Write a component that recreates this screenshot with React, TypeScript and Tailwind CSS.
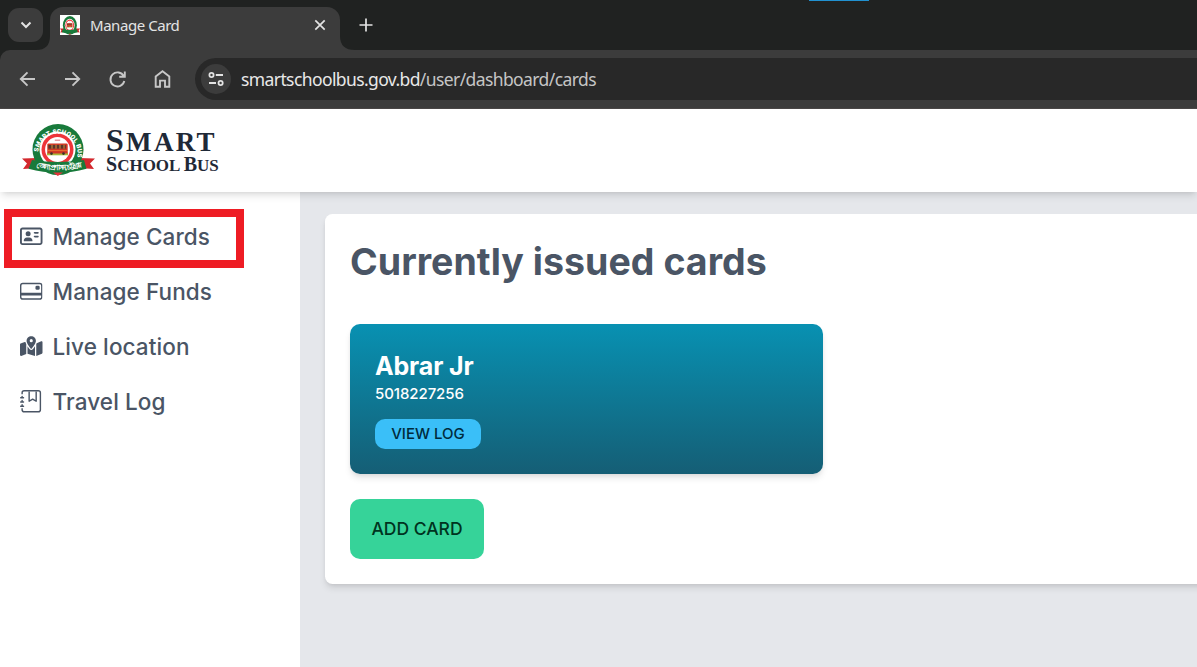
import type { ReactNode } from "react";
import { FaRegAddressCard, FaMapLocationDot } from "react-icons/fa6";
import { BsCreditCard, BsJournalBookmark } from "react-icons/bs";

function Emblem({ className, lettering = true }: { className: string; lettering?: boolean }) {
  return (
    <svg className={className} viewBox="7 9 73 52" preserveAspectRatio="none">
      <defs>
        <path id="ringText" d="M 23.6 41 A 19.6 19.6 0 1 1 62.4 41" />
        <path id="bandText" d="M 18 52.4 Q 43 57.4 68 52.4" />
      </defs>
      <path d="M7 43.5 L23 43 L23 53 L8 54 L12 48.5 Z" fill="#d3282d" />
      <path d="M80 43.5 L63 43 L63 53 L79 54 L75 48.5 Z" fill="#d3282d" />
      <circle cx="43" cy="34.6" r="25.5" fill="#187a3b" />
      <circle cx="42.5" cy="34.5" r="18" fill="#fff" />
      <circle cx="42.5" cy="34.5" r="16" fill="#ee343a" />
      <circle cx="42.5" cy="34.5" r="12.4" fill="#fff" />
      <rect x="32" y="37.5" width="21" height="2.8" fill="#a4b93c" />
      <rect x="32.3" y="28.6" width="20.4" height="10" rx="1.2" fill="#cf3524" />
      <rect x="33.4" y="30" width="17.4" height="3.6" fill="#58352b" />
      <path d="M37 29.7v4M41 29.7v4M45 29.7v4M49 29.7v4" stroke="#e99a3c" strokeWidth=".9" />
      <path d="M32.5 35.6h20" stroke="#ef8c35" strokeWidth=".7" />
      <circle cx="36.5" cy="38.6" r="1.3" fill="#3d302c" />
      <circle cx="48.5" cy="38.6" r="1.3" fill="#3d302c" />
      <path d="M39.8 25.2h5.4" stroke="#df858b" strokeWidth="1.2" />
      <path d="M17 45 Q43 49 69 45 L71.5 53.8 Q43 61.5 13.5 53.8 Z" fill="#187a3b" />
      <path d="M38 57.4 L48 57.4 L42.8 61 Z" fill="#e4343a" />
      {lettering && (
        <>
          <text fill="#fff" fontSize="6.4" fontWeight="900" fontFamily="Roboto, sans-serif">
            <textPath href="#ringText" startOffset="4" textLength="64">SMART SCHOOL BUS</textPath>
          </text>
          <text fill="#fff" fontSize="7.4" fontWeight="700" fontFamily="'Noto Sans', sans-serif">
            <textPath href="#bandText" startOffset="1.5" textLength="47">জেলা প্রশাসন, চট্টগ্রাম</textPath>
          </text>
        </>
      )}
    </svg>
  );
}

function BrowserChrome() {
  return (
    <div className="h-[109px] shrink-0 bg-[#202221] font-['Noto_Sans',sans-serif]">
      <div className="relative flex h-[50px]">
        <div className="ml-2 mt-2 flex h-[34px] w-[35px] items-center justify-center rounded-[11px] bg-[#3c3c3c]">
          <svg className="size-4" viewBox="0 0 16 16" fill="none" stroke="#e3e3e3" strokeWidth="2">
            <path d="M3.5 5.5 8 10l4.5-4.5" />
          </svg>
        </div>
        <svg className="h-[50px] w-[7px] overflow-visible" viewBox="0 0 7 50">
          <path d="M-7 50 Q7 50 7 36 V50Z" fill="#3c3c3c" />
        </svg>
        <div className="mt-[7px] flex w-[290px] items-center rounded-t-[13px] bg-[#3c3c3c] pb-[7px] pl-[10px] pr-[13px]">
          <div className="flex size-5 items-center justify-center bg-white">
            <Emblem className="h-[19px] w-5" lettering={false} />
          </div>
          <span className="ml-[10px] flex-1 whitespace-nowrap text-[15px] tracking-[-0.45px] text-[#e3e3e3]">Manage Card</span>
          <svg className="size-[14px]" viewBox="0 0 14 14" stroke="#e3e3e3" strokeWidth="1.7">
            <path d="m2.3 2.3 9.4 9.4m0-9.4-9.4 9.4" />
          </svg>
        </div>
        <svg className="h-[50px] w-[15px]" viewBox="0 0 15 50">
          <path d="M0 36 Q0 50 15 50 H0Z" fill="#3c3c3c" />
        </svg>
        <svg className="ml-[4px] mt-[18px] size-[14px]" viewBox="0 0 14 14" stroke="#e3e3e3" strokeWidth="1.7">
          <path d="M7 .5v13M.5 7h13" />
        </svg>
        <div className="absolute left-[809px] top-0 h-px w-[60px] bg-[#2191d0]" />
      </div>
      <div className="flex h-[59px] items-center rounded-tl-[10px] border-b border-[#4a4747] bg-[#3c3c3c] pl-[18px]">
        <svg className="h-5 w-[160px]" viewBox="0 0 160 20" fill="none" stroke="#c7c7c7" strokeWidth="1.9">
          <path d="M17 10H3M9.5 3.3 2.8 10l6.7 6.7" />
          <path d="M47 10h14M54.5 3.3l6.7 6.7-6.7 6.7" />
          <path d="M105.7 7.2A7 7 0 1 0 106.3 12M106.8 2.5v5.3h-5.6" />
          <path d="M137.7 17.8V7.4l6.8-5.1 6.8 5.1v10.4h-4.3v-6.2h-5v6.2z" />
        </svg>
        <div className="ml-[17px] flex h-[42px] flex-1 items-center rounded-l-full bg-[#282828] pl-[6px]">
          <div className="flex size-[30px] items-center justify-center rounded-full bg-[#3c3c3c]">
            <svg className="size-[18px]" viewBox="0 0 18 18" fill="none" stroke="#e3e3e3" strokeWidth="1.8">
              <circle cx="4.5" cy="5" r="2.1" />
              <path d="M8.8 5H16M2 13h7" />
              <circle cx="13.6" cy="13" r="2.1" />
            </svg>
          </div>
          <div className="ml-[10px] flex whitespace-nowrap text-[17.5px] tracking-[-0.6px]">
            <span className="text-[#e8e8e8]">smartschoolbus.gov.bd</span>
            <span className="text-[#c5c5c5]">/user/dashboard/cards</span>
          </div>
        </div>
      </div>
    </div>
  );
}

function NavItem({ icon, label }: { icon: ReactNode; label: string }) {
  return (
    <li className="flex h-[55px] items-center gap-[10px] text-[22.5px] font-medium tracking-[0.1px] text-gray-600">
      {icon}
      <span className="whitespace-nowrap">{label}</span>
    </li>
  );
}

export default function App() {
  return (
    <div className="flex h-[667px] w-full flex-col overflow-hidden bg-white font-[Inter,sans-serif]">
      <BrowserChrome />
      <header className="relative z-10 flex h-[83px] shrink-0 items-center bg-white pl-[22px] shadow-[0_5px_7.5px_-1.25px_rgba(0,0,0,0.1),0_2.5px_5px_-2.5px_rgba(0,0,0,0.1)]">
        <Emblem className="-mt-[2px] h-[52px] w-[73px]" />
        <div className="ml-[11px] font-['Liberation_Serif',serif] font-bold text-[#1f2937]">
          <div className="whitespace-nowrap text-[27px] leading-[28px] tracking-[2.3px]">
            <span className="text-[32px]">S</span>MART
          </div>
          <div className="-mt-[2px] whitespace-nowrap text-[17px] leading-[20px]">
            <span className="text-[20px]">S</span>CHOOL <span className="text-[20px]">B</span>US
          </div>
        </div>
      </header>
      <div className="flex flex-1">
        <nav className="relative w-[300px] shrink-0 bg-white pl-5 pt-[17px]">
          <ul>
            <NavItem icon={<FaRegAddressCard className="size-[22.5px]" />} label="Manage Cards" />
            <NavItem icon={<BsCreditCard className="size-[22.5px] rotate-180" />} label="Manage Funds" />
            <NavItem icon={<FaMapLocationDot className="size-[22.5px]" />} label="Live location" />
            <NavItem icon={<BsJournalBookmark className="size-[22.5px]" />} label="Travel Log" />
          </ul>
          <div className="absolute left-1 top-[17px] h-[59px] w-60 border-8 border-[#ee1c24]" />
        </nav>
        <main className="flex-1 overflow-hidden bg-gray-200 pl-[25px] pt-[22px]">
          <section className="-mr-5 h-[370px] rounded-[7.5px] bg-white pl-[25px] pt-[25px] shadow-[0_5px_7.5px_-1.25px_rgba(0,0,0,0.1),0_2.5px_5px_-2.5px_rgba(0,0,0,0.1)]">
            <h1 className="text-[37.5px] font-bold leading-[45px] tracking-[0.03px] text-gray-600">Currently issued cards</h1>
            <article className="mt-[40px] flex h-[150px] w-[473px] flex-col items-start rounded-[10px] bg-linear-to-b/srgb from-[#0891b2] to-[#155e75] pl-[25px] pt-[25px] text-white shadow-[0_5px_7.5px_-1.25px_rgba(0,0,0,0.1),0_2.5px_5px_-2.5px_rgba(0,0,0,0.1)]">
              <h2 className="text-[25px] font-bold leading-[35px] tracking-[-0.15px]">Abrar Jr</h2>
              <p className="text-[15px] font-medium leading-[20px] tracking-[-0.08px]">5018227256</p>
              <button className="mt-[15px] h-[30px] w-[106px] rounded-[10px] bg-[#3abff8] text-[15px] font-medium text-[#002b3d]">VIEW LOG</button>
            </article>
            <button className="mt-[25px] h-[60px] w-[134px] rounded-[10px] bg-[#36d399] text-[17.5px] font-medium text-[#003320]">ADD CARD</button>
          </section>
        </main>
      </div>
    </div>
  );
}
